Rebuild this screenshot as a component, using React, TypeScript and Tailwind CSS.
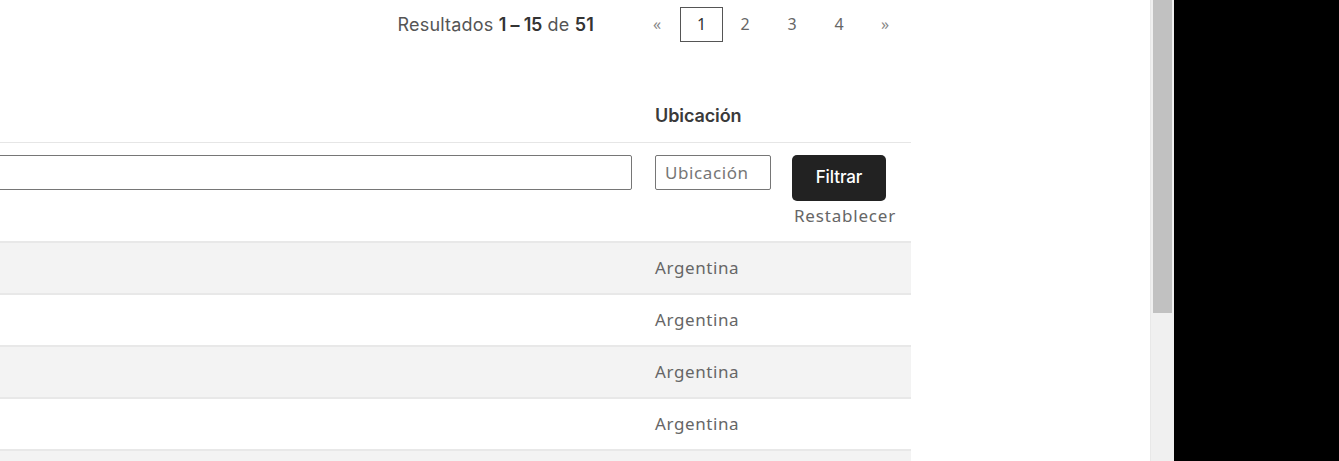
const rows = ["Argentina", "Argentina", "Argentina", "Argentina", "Argentina"];

const noto = { fontFamily: "'Noto Sans', sans-serif" };

export default function App() {
  return (
    <div className="flex h-[461px] w-[1339px] overflow-hidden bg-black" style={{ fontFamily: "Inter, 'Noto Sans', sans-serif" }}>
      <div className="h-full w-[1150px] bg-white">
        <div className="w-[911px]">
          {/* pagination bar */}
          <div className="flex h-[48px] items-center justify-end pr-[22px]">
            <p className="mr-[59px] text-[18px] tracking-[0.2px] text-[#555]">
              Resultados <span className="font-semibold tracking-[-0.2px] text-[#333]">1 – 15</span> de{" "}
              <span className="font-semibold text-[#333]">51</span>
            </p>
            <nav className="flex items-center text-[16px] text-[#666]" style={noto}>
              <span className="mr-[19px] w-[8px] text-center text-[#888]">«</span>
              <span className="flex h-[35px] w-[43px] items-center justify-center border border-[#555] text-[#333]">1</span>
              <span className="ml-[17px] w-[10px] text-center">2</span>
              <span className="ml-[37px] w-[10px] text-center">3</span>
              <span className="ml-[37px] w-[10px] text-center">4</span>
              <span className="ml-[37px] w-[8px] text-center text-[#888]">»</span>
            </nav>
          </div>

          {/* header */}
          <div className="mt-[48px] flex h-[47px] items-end border-b border-[#e6e6e6] pb-[13px]">
            <div className="w-[643px]" />
            <div className="pl-[12px] text-[18px] font-semibold tracking-[-0.1px] text-[#3a3a3a]">Ubicación</div>
          </div>

          {/* filters */}
          <div className="flex h-[98px] pt-[12px]">
            <div className="w-[643px] pr-[12px]">
              <input className="ml-[-4px] h-[35px] w-[636px] rounded-[2px] border border-[#767676] bg-white outline-none" />
            </div>
            <div className="w-[137px] pl-[12px]">
              <input
                placeholder="Ubicación"
                className="h-[35px] w-[116px] rounded-[2px] border border-[#767676] px-[9px] text-[17px] tracking-[0.6px] text-[#333] outline-none placeholder:text-[#767676]"
                style={noto}
              />
            </div>
            <div className="flex flex-col items-start pl-[12px]">
              <button className="h-[46px] w-[94px] rounded-[5px] bg-[#222] text-[17px] font-medium tracking-[-0.1px] text-white">Filtrar</button>
              <span className="mt-[2px] pl-[2px] text-[17px] tracking-[0.8px] text-[#666]" style={noto}>
                Restablecer
              </span>
            </div>
          </div>

          {/* rows */}
          {rows.map((r, i) => (
            <div
              key={i}
              className={`flex h-[52px] items-center border-t-2 border-[#e8e8e8] ${i % 2 === 0 ? "bg-[#f3f3f3]" : "bg-white"}`}
            >
              <div className="w-[643px]" />
              <div className="pl-[12px] text-[17px] tracking-[0.6px] text-[#666]" style={noto}>
                {r}
              </div>
            </div>
          ))}
        </div>
      </div>

      {/* scrollbar */}
      <div className="h-full w-[24px] border-l border-[#e8e8e8] bg-[#f0f0f0] px-[2px]">
        <div className="h-[313px] w-full bg-[#c1c1c1]" />
      </div>
    </div>
  );
}
